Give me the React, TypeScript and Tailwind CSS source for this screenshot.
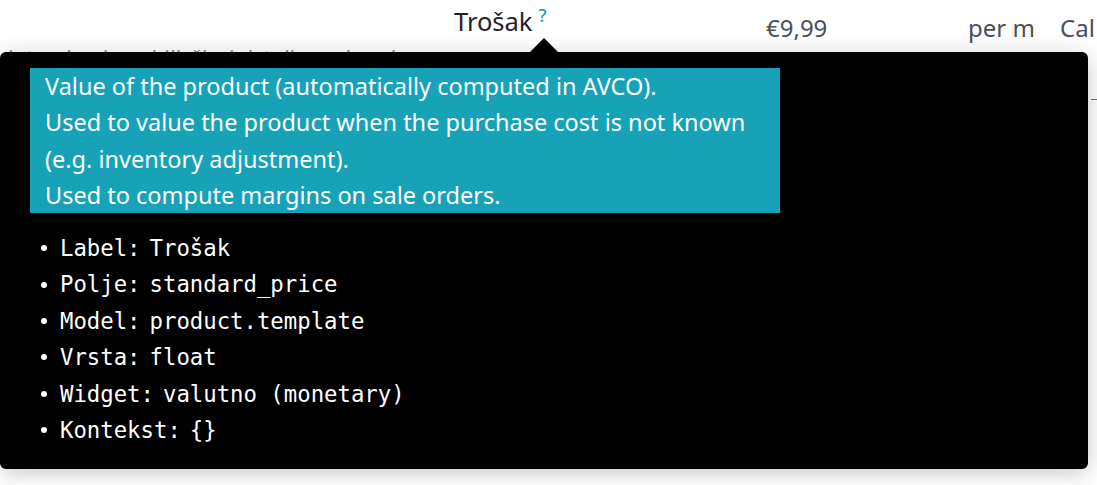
import React from "react";

const rows: [string, string][] = [
  ["Label:", "Trošak"],
  ["Polje:", "standard_price"],
  ["Model:", "product.template"],
  ["Vrsta:", "float"],
  ["Widget:", "valutno (monetary)"],
  ["Kontekst:", "{}"],
];

export default function App() {
  return (
    <div className="relative w-[1097px] h-[485px] overflow-hidden bg-white font-['Noto_Sans',sans-serif]">
      {/* background form content */}
      <div className="flex h-[40px] items-start pt-[5px]">
        <div className="w-[454px] shrink-0" />
        <div className="w-[312px] shrink-0 flex items-start">
          <span className="text-[25.5px] leading-[32px] text-[#1f2229]">Trošak</span>
          <span className="ml-[6px] mt-[1px] text-[18px] leading-[18px] font-medium text-[#17a2b8]">?</span>
        </div>
        <div className="w-[202px] shrink-0 pt-[8px] text-[24px] leading-[30px] text-[#4a4f59]">€9,99</div>
        <div className="w-[92px] shrink-0 pt-[8px] text-[24px] leading-[30px] text-[#4a4f59]">per m</div>
        <div className="shrink-0 pt-[8px] text-[24px] leading-[30px] text-[#4a4f59]">Cal</div>
      </div>
      <div className="pl-[6px] pt-[2px] text-[22px] leading-[30px] italic text-[#8a8f97] whitespace-nowrap">
        interni opis za bilješke i detalje proizvoda
      </div>
      <div className="absolute right-0 top-[99px] w-[6px] h-[1px] bg-[#6b7280]" />

      {/* tooltip */}
      <div className="absolute left-0 top-[52px] w-[1088px] h-[417px] rounded-[6px] bg-black shadow-[0_4px_22px_rgba(0,0,0,0.22)]">
        <div className="absolute left-[530px] top-[-14px] w-0 h-0 border-l-[14px] border-r-[14px] border-b-[14px] border-l-transparent border-r-transparent border-b-black" />
        <div className="ml-[30px] mt-[16px] w-[750px] bg-[#17a2b8] px-[15px] text-[23.5px] leading-[36.25px] text-white">
          <div>Value of the product (automatically computed in AVCO).</div>
          <div>Used to value the product when the purchase cost is not known</div>
          <div>(e.g. inventory adjustment).</div>
          <div>Used to compute margins on sale orders.</div>
        </div>
        <ul className="mt-[17px] font-['DejaVu_Sans_Mono',monospace] text-[22.3px] leading-[36.4px] text-white">
          {rows.map(([k, v]) => (
            <li key={k} className="flex items-center">
              <span className="ml-[41px] mr-[13px] w-[6px] h-[6px] rounded-full bg-white" />
              <span>{k}</span>
              <span className="ml-[9px]">{v}</span>
            </li>
          ))}
        </ul>
      </div>
    </div>
  );
}
